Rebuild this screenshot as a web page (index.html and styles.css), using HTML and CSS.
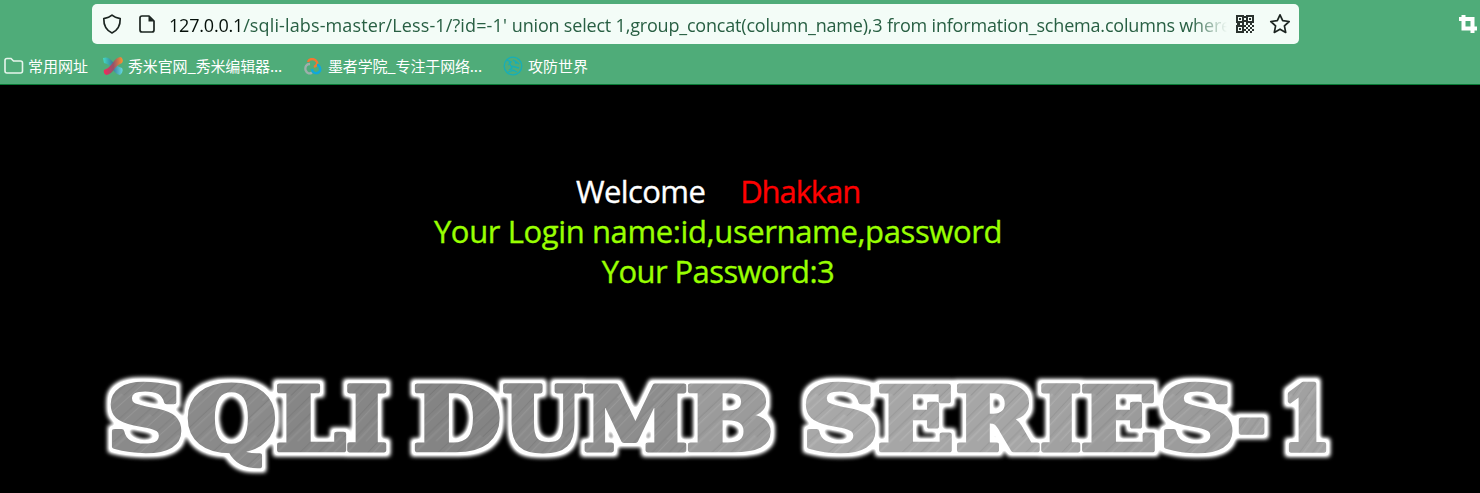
FILE: index.html
```html
<!DOCTYPE html>
<html lang="zh-CN">
<head>
<meta charset="utf-8">
<title>Less-1</title>
<link rel="stylesheet" href="styles.css">
</head>
<body>
<header class="chrome">
  <div class="toolbar">
    <div class="urlbar">
      <svg class="icon shield" viewBox="0 0 20 20" width="20" height="20"><path d="M10 1.2C8 3 5 4 1.8 4.6C1.6 11 3.7 16 10 19C16.300 16 18.400 11 18.200 4.600C15 4 12 3 10 1.200Z"/></svg>
      <svg class="icon page" viewBox="0 0 16 18" width="16" height="18"><path d="M3 1H10L15 6V15Q15 17 13 17H3Q1 17 1 15V3Q1 1 3 1Z"/><path class="solid" d="M9.500 1V6.500H15Z"/></svg>
      <div class="address"><span class="host">127.0.0.1</span><span class="path">/sqli-labs-master/Less-1/?id=-1' </span><span class="query">union select 1,group_concat(column_name),3 from information_schema.columns where</span></div>
      <svg class="qr" viewBox="0 0 18 18" width="18" height="18">
        <path class="ring" d="M1 1H7V7H1ZM11 1H17V7H11ZM1 11H7V17H1Z"/>
        <path class="dots" d="M3 3h2v2H3zM13 3h2v2h-2zM3 13h2v2H3zM8 1h2v2H8zM8 5h2v2H8zM1 8h3v2H1zM6 8h2v2H6zM10 8h2v2h-2zM14 8h2v2h-2zM8 10h2v2H8zM12 10h2v2h-2zM16 10h2v2h-2zM10 12h2v2h-2zM14 12h2v2h-2zM8 14h2v2H8zM12 14h2v2h-2zM16 14h2v2h-2zM10 16h2v2h-2zM14 16h2v2h-2z"/>
      </svg>
      <svg class="icon star" viewBox="0 0 22 22" width="22" height="22"><path d="M11 1.800L13.700 7.700L20.200 8.500L15.400 12.900L16.700 19.400L11 16.200L5.300 19.400L6.600 12.900L1.800 8.500L8.300 7.700Z"/></svg>
    </div>
    <svg class="crop" viewBox="0 0 18 18" width="18" height="18"><path d="M0 4H13.500V18M4.500 0V13.500H18"/></svg>
  </div>
  <nav class="bookmarks">
    <div class="bookmark b1">
      <svg viewBox="0 0 20 18" width="20" height="18"><path class="folder" d="M3 1.500H7L9.500 4H16.500Q18.500 4 18.500 6V14Q18.500 16 16.500 16H3Q1 16 1 14V3.500Q1 1.500 3 1.500Z"/></svg>
      <span>常用网址</span>
    </div>
    <div class="bookmark b2">
      <svg viewBox="0 0 20 18" width="20" height="18">
        <defs>
          <linearGradient id="xa"><stop offset="0" stop-color="#42dcc5"/><stop offset=".5" stop-color="#397d9b"/><stop offset="1" stop-color="#64d9e2"/></linearGradient>
          <linearGradient id="xb"><stop offset="0" stop-color="#f7285c"/><stop offset=".5" stop-color="#94536a"/><stop offset="1" stop-color="#ff922f"/></linearGradient>
        </defs>
        <path d="M0 1Q5-1 9 4Q12 9 19 11Q21 15 17 18Q12 17 9 11Q6 7 1 6Z" fill="url(#xa)"/>
        <path d="M1 13Q6 11 9 7Q13 0 18 0Q21 3 19 6Q14 8 12 11Q8 18 3 18Q0 16 1 13Z" fill="url(#xb)"/>
      </svg>
      <span>秀米官网_秀米编辑器...</span>
    </div>
    <div class="bookmark b3">
      <svg class="rings" viewBox="0 0 18 17" width="18" height="17"><path stroke="#9eafac" d="M6 6C2 6 1 9 1.500 12C3 16 6 16 8 14.500"/><path stroke="#f27732" d="M4 4C5 0 11 0 13 4C14 7 12 8 10 9"/><path stroke="#11a8db" d="M8 11C8 15 13 17 16 13C17 10 15 7 13 7"/></svg>
      <span>墨者学院_专注于网络...</span>
    </div>
    <div class="bookmark b4">
      <svg class="globe" viewBox="0 0 20 20" width="20" height="20"><circle cx="10" cy="10" r="8.800"/><path d="M4 4L8 6L5 9M6 6L9 12L6 14M10 4Q13 5 13 8M8 10L16 12M7 13L14 16M5 16L12 14M12 5L16 8"/></svg>
      <span>攻防世界</span>
    </div>
  </nav>
</header>
<main class="page-body">
  <div class="line welcome"><span class="w">Welcome</span><span class="name">Dhakkan</span></div>
  <div class="line login">Your Login name:id,username,password</div>
  <div class="line pass">Your Password:3</div>
  <svg class="banner" viewBox="90 360 1260 133" width="1260" height="133" role="img" aria-label="SQLI DUMB SERIES-1">
    <defs>
      <pattern id="metal" width="31" height="170" patternUnits="userSpaceOnUse" patternTransform="rotate(42)">
        <rect width="31" height="170" fill="#8a8a8a"/>
        <path stroke="#989898" stroke-width=".8" d="M2 0V70M9 40V150M15 0V90M22 60V170M28 10V60"/>
        <path stroke="#7c7c7c" stroke-width=".8" d="M5 20V120M12 0V60M18 70V170M25 0V90M30 90V160"/>
        <path stroke="#929292" stroke-width="2" d="M7 0V35M20 0V110M3 120V170"/>
      </pattern>
      <filter id="glow" filterUnits="userSpaceOnUse" x="90" y="360" width="1260" height="133" color-interpolation-filters="sRGB">
        <feMorphology in="SourceAlpha" operator="dilate" radius="4" result="wide"/>
        <feGaussianBlur in="wide" stdDeviation="1.900" result="soft"/>
        <feComponentTransfer in="soft" result="strong"><feFuncA type="linear" slope="1.350"/></feComponentTransfer>
        <feFlood flood-color="#fff"/>
        <feComposite in2="strong" operator="in" result="halo"/>
        <feMerge><feMergeNode in="halo"/><feMergeNode in="SourceGraphic"/></feMerge>
      </filter>
    </defs>
    <g filter="url(#glow)"><g id="letters" class="letters"></g></g>
  </svg>
</main>
<script src="banner.js"></script>
</body>
</html>
```
FILE: styles.css
```css
body { margin: 0; background: #000; overflow: hidden; font-family: "Open Sans", "Noto Sans", "Noto Sans CJK SC", sans-serif; }
.chrome { height: 84px; background: #4fac79; border-bottom: 1px solid #087a35; box-sizing: content-box; }
.toolbar { display: flex; height: 48px; padding: 4px 3px 0 92px; box-sizing: border-box; justify-content: space-between; }
.urlbar { display: flex; align-items: center; width: 1207px; height: 40px; box-sizing: border-box; padding-left: 10px; background: #f3fcf7; border-radius: 5px; }
.icon path { fill: none; stroke: #1b2420; stroke-width: 1.7; stroke-linejoin: round; }
.icon .solid { fill: #1b2420; stroke: none; }
.page { margin-left: 17px; }
.address { margin-left: 14px; width: 1058px; overflow: hidden; white-space: nowrap; font-size: 18px; line-height: 28px; padding-top: 1px; mask-image: linear-gradient(to right, #000 calc(100% - 36px), transparent); }
.host { color: #05100a; letter-spacing: -.2px; }
.path { color: #285f43; letter-spacing: .13px; }
.query { color: #285f43; letter-spacing: -.19px; }
.qr { margin-left: 9px; }
.ring { fill: none; stroke: #2b332f; stroke-width: 2; }
.dots { fill: #2b332f; }
.star { margin-left: 15px; }
.crop { margin-top: 11px; }
.crop path { fill: none; stroke: #fff; stroke-width: 4; }
.bookmarks { display: flex; height: 36px; font-family: "Noto Sans CJK SC", sans-serif; font-size: 15px; line-height: 36px; color: #fff; }
.bookmark { display: flex; align-items: center; gap: 4px; white-space: nowrap; }
.b1 { margin-left: 4px; }
.b2 { margin-left: 15px; gap: 5px; letter-spacing: -.15px; }
.b3 { margin-left: 22px; gap: 6px; letter-spacing: -.15px; }
.b4 { margin-left: 21px; gap: 5px; }
.folder { fill: none; stroke: #e6f5ec; stroke-width: 1.6; }
.rings path { fill: none; stroke-width: 2.3; }
.globe { fill: none; stroke: #16aeb9; stroke-width: 1.3; }
.page-body { display: flex; flex-direction: column; height: 408px; padding-top: 86px; box-sizing: border-box; }
.line { width: 1436px; text-align: center; font-size: 31px; line-height: 40px; height: 40px; white-space: nowrap; -webkit-text-stroke: .35px currentColor; }
.welcome { display: flex; justify-content: center; gap: 35px; }
.w { color: #fff; letter-spacing: -.6px; }
.name { color: #f00; letter-spacing: -1.1px; }
.login, .pass { color: #9f0; }
.login { letter-spacing: -.38px; }
.pass { letter-spacing: -.6px; }
.banner { display: block; margin: 68px 0 0 90px; flex: none; }
.letters text { font-family: "DejaVu Serif", serif; font-weight: bold; font-size: 88px; fill: url(#metal); stroke: url(#metal); stroke-width: 5; vector-effect: non-scaling-stroke; stroke-linejoin: round; }
```
FILE: banner.js
```js
// Each glyph of the banner: left and right edge of its ink, brightness of the metal.
const glyphs = [
  ["S", 110, 182, 1], ["Q", 187, 275, 1], ["L", 277, 346, .97], ["I", 347, 387, .97],
  ["D", 415, 500, .96], ["U", 503, 583, 1], ["M", 584, 687, 1.02], ["B", 688, 771, 1.12],
  ["S", 805, 876, 1.22], ["E", 879, 952, 1.2], ["R", 957, 1040, 1.2], ["I", 1041, 1081, 1.17],
  ["E", 1082, 1155, 1.12], ["S", 1162, 1233, 1.13], ["-", 1238, 1265, 1.15], ["1", 1287, 1327, 1.17]
];
const edge = 2.5;
const ctx = document.createElement("canvas").getContext("2d");
ctx.font = 'bold 88px "DejaVu Serif"';
const group = document.getElementById("letters");
for (const [char, left, right, light] of glyphs) {
  const m = ctx.measureText(char);
  const ink = m.actualBoundingBoxRight + m.actualBoundingBoxLeft;
  const scale = (right - left - 2 * edge) / ink;
  const x = left + edge + m.actualBoundingBoxLeft * scale;
  const t = document.createElementNS("http://www.w3.org/2000/svg", "text");
  t.textContent = char;
  t.style.filter = `brightness(${light})`;
  t.setAttribute("transform", `translate(${x} 451) scale(${scale} 1)`);
  group.appendChild(t);
}
```
